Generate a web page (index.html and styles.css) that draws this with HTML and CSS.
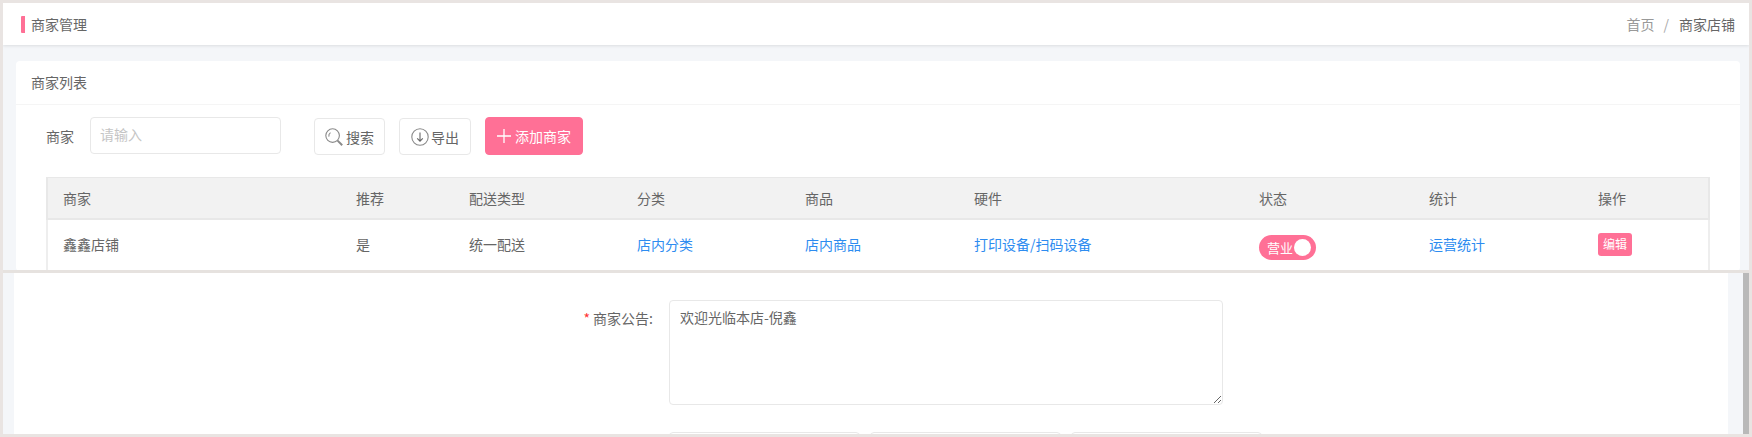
FILE: index.html
```html
<!DOCTYPE html>
<html lang="zh">
<head>
<meta charset="utf-8">
<title>商家管理</title>
<link rel="stylesheet" href="styles.css">
</head>
<body>
<div class="frame">
  <div class="top-pane">
    <header class="page-head">
      <h1 class="page-title">商家管理</h1>
      <nav class="crumbs"><span class="crumb">首页</span><span class="crumb-sep">/</span><span class="crumb-current">商家店铺</span></nav>
    </header>
    <section class="card">
      <div class="card-head">商家列表</div>
      <div class="card-body">
        <div class="filters">
          <span class="filter-label">商家</span>
          <div class="filter-input">请输入</div>
          <button class="btn btn-search">
            <svg class="icon" viewBox="0 0 18 18" fill="none" stroke="#8a8a8a" stroke-width="1.1"><circle cx="7.6" cy="7.6" r="6.8"/><path d="M3.9 8.6a3.9 3.9 0 0 1 1.6-4"/><path d="M12.6 12.6l4.6 4.6" stroke-width="2"/></svg>
            搜索
          </button>
          <button class="btn btn-export">
            <svg class="icon" viewBox="0 0 18 18" fill="none" stroke="#8a8a8a" stroke-width="1.1"><circle cx="9" cy="9" r="8.2"/><path d="M9 4.5v8.5M6.2 10.4L9 13.2l2.8-2.8" stroke="#666"/></svg>
            导出
          </button>
          <button class="btn btn-add">
            <svg class="icon-plus" viewBox="0 0 16 16" fill="none" stroke="#fff" stroke-width="1.3"><path d="M8 1v14M1 8h14"/></svg>
            添加商家
          </button>
        </div>
        <table class="shops">
          <colgroup>
            <col class="c1"><col class="c2"><col class="c3"><col class="c4"><col class="c5"><col class="c6"><col class="c7"><col class="c8"><col class="c9">
          </colgroup>
          <thead>
            <tr><th>商家</th><th>推荐</th><th>配送类型</th><th>分类</th><th>商品</th><th>硬件</th><th>状态</th><th>统计</th><th>操作</th></tr>
          </thead>
          <tbody>
            <tr>
              <td>鑫鑫店铺</td>
              <td>是</td>
              <td>统一配送</td>
              <td><a class="link">店内分类</a></td>
              <td><a class="link">店内商品</a></td>
              <td><a class="link">打印设备/扫码设备</a></td>
              <td><span class="switch"><span class="switch-text">营业</span><span class="switch-knob"></span></span></td>
              <td><a class="link">运营统计</a></td>
              <td><span class="tag">编辑</span></td>
            </tr>
          </tbody>
        </table>
      </div>
    </section>
  </div>
  <div class="pane-divider"></div>
  <div class="bottom-pane">
    <div class="side-left"></div>
    <div class="sheet">
      <div class="form-row">
        <label class="form-label"><span class="required">*</span> 商家公告:</label>
        <textarea class="notice" readonly>欢迎光临本店-倪鑫</textarea>
      </div>
      <div class="select-row">
        <div class="select-box"></div>
        <div class="select-box"></div>
        <div class="select-box"></div>
      </div>
    </div>
    <div class="side-right"></div>
    <div class="scrollbar"></div>
  </div>
</div>
</body>
</html>
```

FILE: styles.css
```css
* { box-sizing: border-box; }
html, body { margin: 0; padding: 0; height: 437px; overflow: hidden; }
body {
  font-family: "Noto Sans CJK SC", "Liberation Sans", sans-serif;
  font-size: 14px;
  color: #666;
  background: #e9e4e2;
}
.frame {
  width: 1752px;
  height: 437px;
  border: 3px solid #e9e4e2;
  display: flex;
  flex-direction: column;
  overflow: hidden;
}
.top-pane {
  height: 267px;
  flex: none;
  background: #f4f6f9;
  overflow: hidden;
}
.page-head {
  height: 42px;
  background: #fff;
  display: flex;
  align-items: center;
  justify-content: space-between;
  padding: 0 14px 0 18px;
  box-shadow: 0 1px 3px rgba(0, 0, 0, 0.1);
}
.page-title {
  margin: 0;
  font-size: 14px;
  font-weight: 400;
  line-height: 17px;
  padding-left: 6px;
  border-left: 4px solid #ff7096;
  border-radius: 1px;
}
.crumbs { display: flex; align-items: center; }
.crumb { color: #999; }
.crumb-sep { color: #aaa; margin: 0 10px 0 9px; }
.crumb-current { color: #666; }
.card {
  margin: 16px 9px 0 13px;
  background: #fff;
  border-radius: 4px;
}
.card-head {
  height: 44px;
  line-height: 43px;
  padding-left: 15px;
  border-bottom: 1px solid #f5f5f5;
}
.card-body { padding: 12px 30px 0; }
.filters {
  display: flex;
  align-items: center;
  height: 38px;
}
.filter-label { width: 44px; flex: none; }
.filter-input {
  width: 191px;
  height: 37px;
  line-height: 33px;
  padding-left: 9px;
  color: #c5c5c5;
  border: 1px solid #e8e8e8;
  border-radius: 4px;
  margin-right: 33px;
  margin-top: -1px;
}
.btn {
  display: flex;
  align-items: center;
  height: 37px;
  font: inherit;
  color: #666;
  background: #fff;
  border: 1px solid #e8e8e8;
  border-radius: 4px;
  padding: 0;
  margin-top: 1px;
}
.btn-search { width: 71px; padding-left: 10px; margin-right: 14px; gap: 3px; }
.btn-export { width: 72px; padding-left: 11px; margin-right: 14px; gap: 2px; }
.btn-add {
  width: 98px;
  height: 38px;
  margin-top: 0;
  padding-left: 10px;
  gap: 3px;
  color: #fff;
  background: #ff7096;
  border-color: #ff7096;
}
.icon { width: 18px; height: 18px; flex: none; }
.icon-plus { width: 16px; height: 16px; flex: none; }
.shops {
  table-layout: fixed;
  border-collapse: collapse;
  width: 1662px;
  margin-top: 22px;
}
.c1 { width: 294px; }
.c2 { width: 113px; }
.c3 { width: 168px; }
.c4 { width: 168px; }
.c5 { width: 169px; }
.c6 { width: 285px; }
.c7 { width: 170px; }
.c8 { width: 169px; }
.c9 { width: 126px; }
.shops th {
  height: 41px;
  font-weight: 400;
  text-align: left;
  padding: 0 0 0 15px;
  background: #f2f2f2;
  border-top: 1px solid #e8e8e8;
  border-bottom: 2px solid #e8e8e8;
}
.shops thead tr { border-left: 2px solid #e8e8e8; border-right: 2px solid #e8e8e8; }
.shops tbody tr { border-left: 2px solid #eee; border-right: 2px solid #eee; }
.shops td { height: 52px; padding: 0 0 2px 15px; }
.link { color: #2d8cf0; }
.switch {
  display: flex;
  align-items: center;
  width: 57px;
  height: 25px;
  margin-top: 6px;
  padding-left: 8px;
  border-radius: 13px;
  background: #ff7096;
}
.switch-text { color: #fff; font-size: 13px; width: 27px; }
.switch-knob {
  width: 17px;
  height: 17px;
  border-radius: 50%;
  background: #fff;
}
.tag {
  display: inline-block;
  width: 34px;
  height: 23px;
  line-height: 22px;
  text-align: center;
  font-size: 12px;
  color: #fff;
  background: #ff7096;
  border-radius: 3px;
  vertical-align: middle;
}
.pane-divider { height: 3px; flex: none; background: #e6e2df; }
.bottom-pane {
  flex: 1;
  display: flex;
  min-height: 0;
  background: #f4f6f9;
}
.side-left { width: 11px; flex: none; }
.side-right { width: 15px; flex: none; }
.scrollbar { width: 6px; flex: none; background: #b9b9b9; }
.sheet {
  flex: 1;
  background: #fff;
  overflow: hidden;
  padding-top: 27px;
}
.form-row { display: flex; align-items: flex-start; }
.form-label {
  width: 655px;
  flex: none;
  text-align: right;
  line-height: 37px;
  padding-right: 16px;
}
.required { color: #f33; }
.notice {
  width: 554px;
  height: 105px;
  padding: 4px 10px;
  font: inherit;
  line-height: 24px;
  color: #666;
  border: 1px solid #e8e8e8;
  border-radius: 4px;
  outline: none;
  resize: both;
}
.select-row {
  display: flex;
  gap: 10px;
  margin: 27px 0 0 655px;
}
.select-box {
  width: 191px;
  height: 37px;
  border: 1px solid #e8e8e8;
  border-radius: 4px;
}
```
